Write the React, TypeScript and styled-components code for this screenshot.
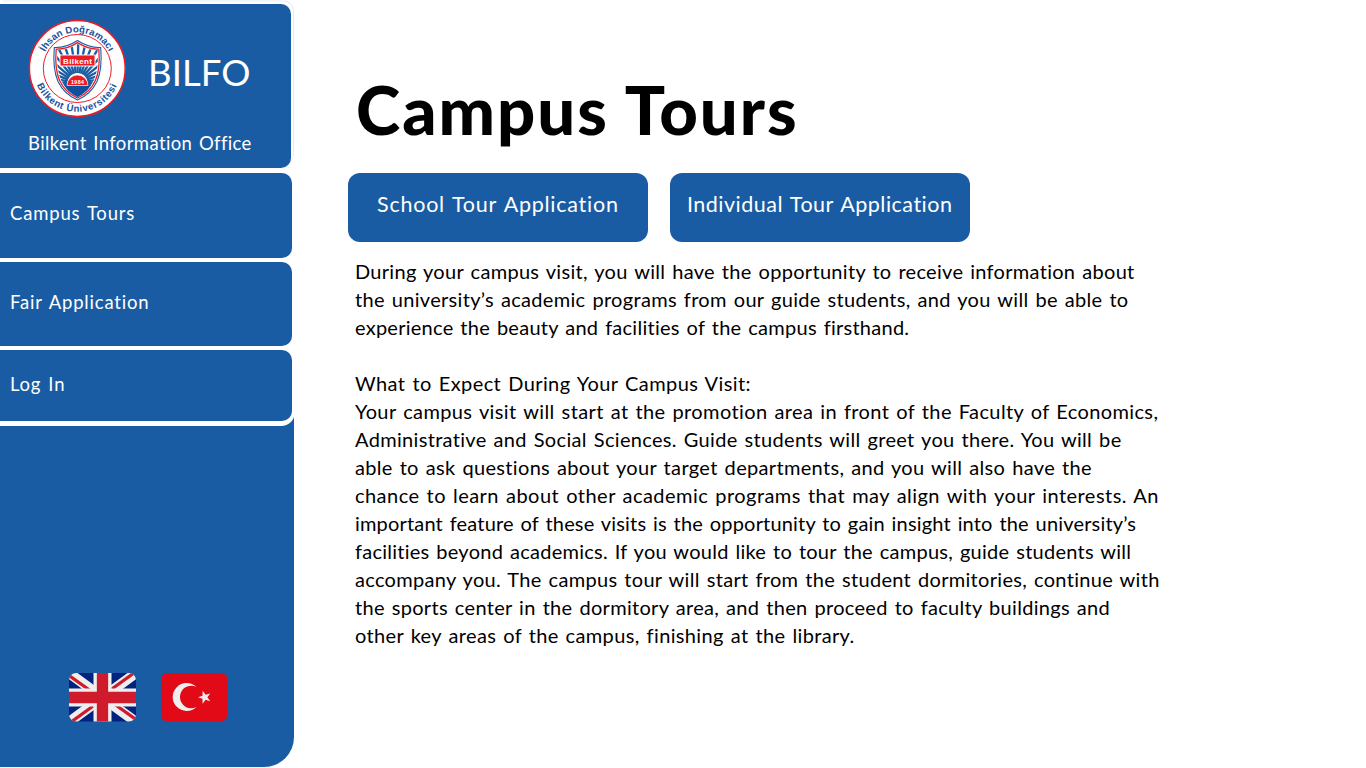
import React from "react";
import styled, { createGlobalStyle } from "styled-components";

const blue = "#1a5ca3";

const GlobalStyle = createGlobalStyle`
  * { box-sizing: border-box; }
  body {
    margin: 0;
    background: #fff;
    font-family: Lato, "Open Sans", sans-serif;
    font-variant-ligatures: none;
    overflow: hidden;
  }
`;

const Page = styled.div`
  display: flex;
  width: 1366px;
  height: 768px;
`;

const Sidebar = styled.aside`
  display: flex;
  flex-direction: column;
  flex: none;
  width: 294.4px;
  height: 767.4px;
  background: ${blue};
  border-radius: 0 0 30px 0;
`;

const Menu = styled.nav`
  display: flex;
  flex-direction: column;
  gap: 4px;
  width: 295px;
  height: 425.6px;
  padding-top: 4px;
  background: #fff;
  border-radius: 0 0 14px 0;
`;

const Brand = styled.header`
  display: flex;
  flex-direction: column;
  flex: none;
  width: 291.4px;
  height: 164.4px;
  margin-bottom: 0.6px;
  padding: 15px 0 0 28px;
  background: ${blue};
  border-radius: 0 10px 10px 0;
  box-shadow: 2.5px -3px 0 -0.5px #fff, 3px -3.5px 0 0 #e6ecf5;
  color: #fff;
`;

const BrandRow = styled.div`
  display: flex;
  align-items: center;
  gap: 21px;
  height: 99px;
`;

const BrandName = styled.span`
  padding-top: 6px;
  font-size: 36.5px;
  line-height: 44px;
  letter-spacing: 0.1px;
`;

const BrandCaption = styled.span`
  margin-top: 13px;
  font-size: 18.5px;
  line-height: 24px;
  letter-spacing: 0.38px;
  word-spacing: 1.5px;
  white-space: nowrap;
`;

const MenuItem = styled.a<{ $height: number; $top: number; $tracking: number }>`
  display: block;
  flex: none;
  width: 292.4px;
  height: ${(p) => p.$height}px;
  padding: ${(p) => p.$top}px 0 0 10px;
  background: ${blue};
  border-radius: 0 10px 10px 0;
  color: #fff;
  font-size: 18.5px;
  line-height: 24px;
  letter-spacing: ${(p) => p.$tracking}px;
  word-spacing: 1.5px;
`;

const Languages = styled.div`
  display: flex;
  gap: 25.5px;
  margin-top: auto;
  padding: 0 0 45.9px 68.5px;
  svg { display: block; }
`;

const Content = styled.main`
  display: flex;
  flex-direction: column;
  padding: 70px 0 0 53.6px;
`;

const Title = styled.h1`
  margin: 0;
  padding-left: 8px;
  height: 103px;
  font-size: 67px;
  font-weight: 900;
  line-height: 79px;
  letter-spacing: 2px;
  white-space: nowrap;
`;

const Actions = styled.div`
  display: flex;
  gap: 22px;
`;

const ActionButton = styled.button<{ $tracking: number }>`
  display: flex;
  justify-content: center;
  width: 299.8px;
  height: 69px;
  padding: 18px 0 0;
  border: 0;
  border-radius: 12px;
  background: ${blue};
  color: #fff;
  font: 400 21.5px/26px Lato, "Open Sans", sans-serif;
  letter-spacing: ${(p) => p.$tracking}px;
  word-spacing: 1.5px;
  white-space: nowrap;
`;

const Article = styled.section`
  padding: 15px 0 0 7px;
`;

const Paragraph = styled.p`
  margin: 0 0 28px;
  font-size: 20px;
  line-height: 28px;
  word-spacing: 1.5px;
`;

const Line = styled.span<{ $tracking: number }>`
  display: block;
  letter-spacing: ${(p) => p.$tracking}px;
  white-space: nowrap;
`;

type TextLine = [text: string, tracking: number];

const paragraphs: TextLine[][] = [
  [
    ["During your campus visit, you will have the opportunity to receive information about", 0.3],
    ["the university’s academic programs from our guide students, and you will be able to", 0.32],
    ["experience the beauty and facilities of the campus firsthand.", 0.26],
  ],
  [
    ["What to Expect During Your Campus Visit:", 0.41],
    ["Your campus visit will start at the promotion area in front of the Faculty of Economics,", 0.38],
    ["Administrative and Social Sciences. Guide students will greet you there. You will be", 0.325],
    ["able to ask questions about your target departments, and you will also have the", 0.33],
    ["chance to learn about other academic programs that may align with your interests. An", 0.46],
    ["important feature of these visits is the opportunity to gain insight into the university’s", 0.175],
    ["facilities beyond academics. If you would like to tour the campus, guide students will", 0.255],
    ["accompany you. The campus tour will start from the student dormitories, continue with", 0.31],
    ["the sports center in the dormitory area, and then proceed to faculty buildings and", 0.31],
    ["other key areas of the campus, finishing at the library.", 0.36],
  ],
];

const rays = Array.from({ length: 36 }, (_, i) => (i * 10 * Math.PI) / 180);

const Crest = () => (
  <svg width="99" height="99" viewBox="0 0 99 99">
    <defs>
      <path id="ringTop" d="M 12.9 49.5 A 36.1 36.1 0 0 1 85.1 49.5" />
      <path id="ringBottom" d="M 5.6 49.5 A 43.4 43.4 0 0 0 92.4 49.5" />
      <clipPath id="shieldClip">
        <path d="M49.5 25 Q39 31.5 29.5 31 Q28 50 33 61 Q38 72 49.5 78 Q61 72 66 61 Q71 50 69.5 31 Q60 31.5 49.5 25Z" />
      </clipPath>
    </defs>
    <circle cx="49.3" cy="49.5" r="47.9" fill="#fff" stroke="#ed1c24" strokeWidth="1.5" />
    <circle cx="49.3" cy="49.5" r="34" fill="none" stroke="#ed1c24" strokeWidth="1" />
    <path d="M49.5 21.5 Q38 29 26.3 28.5 Q24.5 50 30 62.5 Q36 75 49.5 81 Q63 75 69 62.5 Q74.5 50 72.7 28.5 Q61 29 49.5 21.5Z" fill="#fff" stroke={blue} strokeWidth="1.1" />
    <path d="M49.5 23.6 Q39 30.4 28.2 30.2 Q26.5 50 31.6 61.5 Q37 73.5 49.5 79 Q62 73.5 67.4 61.5 Q72.5 50 70.8 30.2 Q60 30.4 49.5 23.6Z" fill="#fff" stroke="#ed1c24" strokeWidth="1.3" />
    <g clipPath="url(#shieldClip)">
      {rays.map((a) => (
        <line
          key={a}
          x1={49.5 + 10 * Math.cos(a)}
          y1={64 + 10 * Math.sin(a)}
          x2={49.5 + 50 * Math.cos(a + 0.02)}
          y2={64 + 50 * Math.sin(a + 0.02)}
          stroke={blue}
          strokeWidth="2.3"
        />
      ))}
      <rect x="25" y="66.5" width="50" height="15" fill="#0f4f9e" />
      <path d="M39 66.5 A10.5 10.5 0 0 1 60 66.5Z" fill="#ed1c24" stroke="#fff" strokeWidth="0.6" />
    </g>
    <rect x="32" y="36" width="35" height="11" fill="#ed1c24" stroke="#fff" strokeWidth="0.9" />
    <g fontFamily="Liberation Sans, Arial, sans-serif" fontWeight="700" textAnchor="middle">
      <text x="49.5" y="44.5" fontSize="8" fill="#fff" textLength="29">Bilkent</text>
      <text x="49.5" y="64.8" fontSize="5.2" fill="#fff" textLength="13">1984</text>
      <g fontSize="9.6" fill="#1a4f9c">
        <text letterSpacing="0.1"><textPath href="#ringTop" startOffset="50%">İhsan Doğramacı</textPath></text>
        <text letterSpacing="0.65"><textPath href="#ringBottom" startOffset="50%">Bilkent Üniversitesi</textPath></text>
      </g>
    </g>
  </svg>
);

const BritishFlag = () => (
  <svg width="67" height="49" viewBox="0 0 67 49">
    <clipPath id="ukClip"><rect width="67" height="48.5" rx="7" /></clipPath>
    <g clipPath="url(#ukClip)">
      <rect width="67" height="49" fill="#00247d" />
      <path d="M-2 -1.5 L69 50.5 M69 -1.5 L-2 50.5" stroke="#eee" strokeWidth="10" />
      <path d="M-2 1 L26 21 M69 48 L41 28 M69 -3 L38 19.5 M-2 52 L29 29.5" stroke="#cf1b2b" strokeWidth="3.2" />
      <path d="M33.5 0V49M0 24.5H67" stroke="#eee" strokeWidth="18" />
      <path d="M33.5 0V49M0 24.5H67" stroke="#cf1b2b" strokeWidth="11.3" />
    </g>
  </svg>
);

const TurkishFlag = () => (
  <svg width="67" height="49" viewBox="0 0 67 49">
    <rect width="66.5" height="48.5" rx="6.5" fill="#e30a17" />
    <path d="M35.5 14 A14 14 0 1 0 35.5 34 A11.3 11.3 0 1 1 35.5 14Z" fill="#eee" />
    <polygon fill="#eee" points="37,24.3 41.5,22.8 41.6,17.8 44.6,21.8 49.2,20.4 46.4,24.3 49.2,28.2 44.6,26.8 41.6,30.8 41.5,25.8" />
  </svg>
);

export default function App() {
  return (
    <>
      <GlobalStyle />
      <Page>
        <Sidebar>
          <Menu>
            <Brand>
              <BrandRow>
                <Crest />
                <BrandName>BILFO</BrandName>
              </BrandRow>
              <BrandCaption>Bilkent Information Office</BrandCaption>
            </Brand>
            <MenuItem $height={84.6} $top={28.5} $tracking={0.82}>Campus Tours</MenuItem>
            <MenuItem $height={84.4} $top={28.5} $tracking={0.8}>Fair Application</MenuItem>
            <MenuItem $height={71.4} $top={22} $tracking={0.8}>Log In</MenuItem>
          </Menu>
          <Languages>
            <BritishFlag />
            <TurkishFlag />
          </Languages>
        </Sidebar>
        <Content>
          <Title>Campus Tours</Title>
          <Actions>
            <ActionButton $tracking={0.75}>School Tour Application</ActionButton>
            <ActionButton $tracking={0.5}>Individual Tour Application</ActionButton>
          </Actions>
          <Article>
            {paragraphs.map((lines, i) => (
              <Paragraph key={i}>
                {lines.map(([text, tracking]) => (
                  <Line key={text} $tracking={tracking}>{text}</Line>
                ))}
              </Paragraph>
            ))}
          </Article>
        </Content>
      </Page>
    </>
  );
}
